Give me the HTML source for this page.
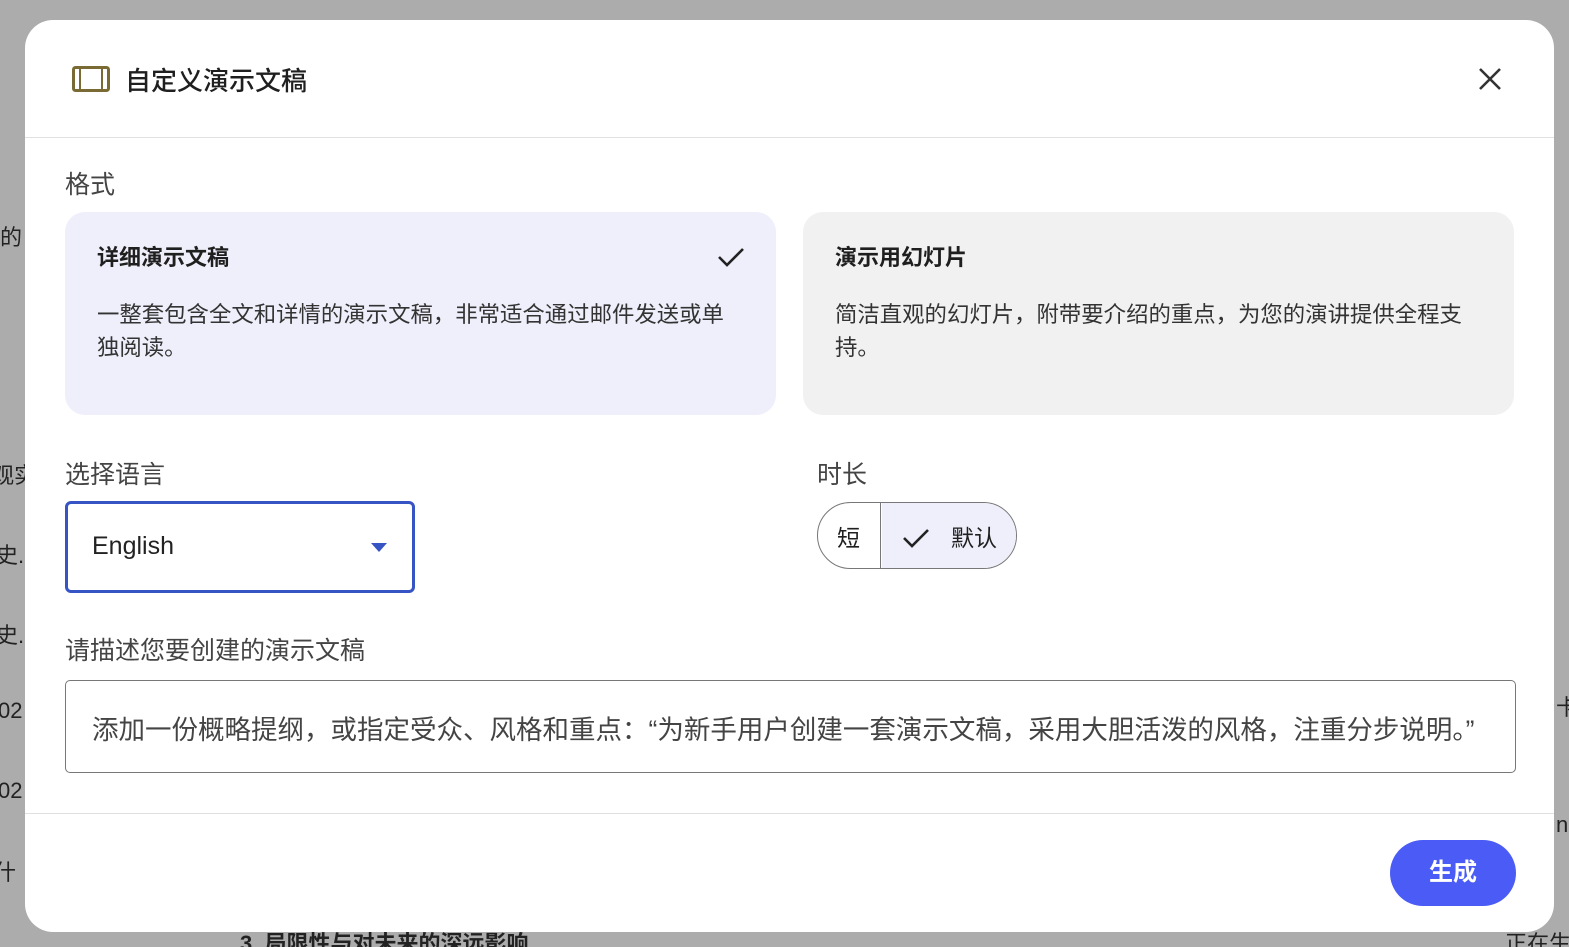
<!DOCTYPE html>
<html><head><meta charset="utf-8"><style>
*{box-sizing:border-box;margin:0;padding:0}
html,body{width:1569px;height:947px;overflow:hidden}
body{background:#acacac;font-family:"Liberation Sans","Noto Sans CJK SC",sans-serif;color:#1f1f1f;position:relative}
.bg{position:absolute;color:#222;font-size:22px;white-space:nowrap}
.modal{position:absolute;left:25px;top:20px;width:1529px;height:912px;background:#fff;border-radius:28px;overflow:hidden}
.hdr{height:118px;border-bottom:1px solid #e0e0e0;position:relative}
.title{position:absolute;left:100px;top:41px;font-size:26px;color:#1f1f1f;font-weight:500}
.lbl{position:absolute;font-size:25px;color:#444;white-space:nowrap}
.card{position:absolute;top:192px;width:711px;height:203px;border-radius:20px;padding:28px 32px}
.card h3{font-size:22px;font-weight:700;margin-bottom:26px;color:#1f1f1f}
.card p{font-size:22.4px;line-height:33px;color:#333;width:642px}
</style></head><body>
<div class="bg" style="left:0;top:220px">的</div>
<div class="bg" style="left:-8px;top:458px">观实</div>
<div class="bg" style="left:-4px;top:538px">史.</div>
<div class="bg" style="left:-4px;top:618px">史.</div>
<div class="bg" style="left:-2px;top:698px">02</div>
<div class="bg" style="left:-2px;top:778px">02</div>
<div class="bg" style="left:-6px;top:855px">什</div>
<div class="bg" style="left:240px;top:926px;font-weight:700">3. 局限性与对未来的深远影响</div>
<div class="bg" style="left:1505px;top:926px">正在生</div>
<div class="bg" style="left:1556px;top:690px">卡</div>
<div class="bg" style="left:1556px;top:812px">n</div>
<div class="modal">
 <div class="hdr">
  <svg style="position:absolute;left:47px;top:46px" width="38" height="26" viewBox="0 0 38 26"><rect x="1.5" y="1.5" width="35" height="23" rx="2" fill="none" stroke="#7a6a33" stroke-width="3"/><line x1="8" y1="2" x2="8" y2="24" stroke="#7a6a33" stroke-width="2"/><line x1="30" y1="2" x2="30" y2="24" stroke="#7a6a33" stroke-width="2"/></svg>
  <div class="title">自定义演示文稿</div>
  <svg style="position:absolute;left:1453px;top:47px" width="24" height="24" viewBox="0 0 24 24"><path d="M2 2L22 22M22 2L2 22" stroke="#333" stroke-width="2.6"/></svg>
 </div>
 <div class="lbl" style="left:40px;top:145px">格式</div>
 <div class="card" style="left:40px;background:#eeeffa">
  <h3>详细演示文稿</h3>
  <p>一整套包含全文和详情的演示文稿，非常适合通过邮件发送或单独阅读。</p>
  <svg style="position:absolute;left:652px;top:34px" width="28" height="22" viewBox="0 0 28 22"><path d="M2 11L10 19L26 3" fill="none" stroke="#222" stroke-width="2.6"/></svg>
 </div>
 <div class="card" style="left:778px;background:#f1f1f1">
  <h3>演示用幻灯片</h3>
  <p style="width:660px">简洁直观的幻灯片，附带要介绍的重点，为您的演讲提供全程支持。</p>
 </div>
 <div class="lbl" style="left:40px;top:435px">选择语言</div>
 <div style="position:absolute;left:40px;top:481px;width:350px;height:92px;border:3px solid #3654c4;border-radius:6px">
  <div style="position:absolute;left:24px;top:28px;font-size:25px;color:#222">English</div>
  <svg style="position:absolute;left:303px;top:39px" width="16" height="10" viewBox="0 0 16 10"><path d="M0 0H16L8 9Z" fill="#3654c4"/></svg>
 </div>
 <div class="lbl" style="left:792px;top:435px">时长</div>
 <div style="position:absolute;left:792px;top:482px;width:200px;height:67px;border:1px solid #777;border-radius:34px;overflow:hidden">
  <div style="position:absolute;left:0;top:0;width:63px;height:67px;border-right:1px solid #777"></div>
  <div style="position:absolute;left:64px;top:0;width:136px;height:67px;background:#eeeffa"></div>
  <div style="position:absolute;left:19px;top:16px;font-size:23px">短</div>
  <svg style="position:absolute;left:84px;top:24px" width="28" height="22" viewBox="0 0 28 22"><path d="M2 11L10 19L26 3" fill="none" stroke="#222" stroke-width="2.6"/></svg>
  <div style="position:absolute;left:133px;top:16px;font-size:23px">默认</div>
 </div>
 <div class="lbl" style="left:40px;top:611px">请描述您要创建的演示文稿</div>
 <div style="position:absolute;left:40px;top:660px;width:1451px;height:93px;border:1px solid #777;border-radius:5px">
  <div style="position:absolute;left:26px;top:27px;font-size:26.5px;color:#444;white-space:nowrap">添加一份概略提纲，或指定受众、风格和重点：“为新手用户创建一套演示文稿，采用大胆活泼的风格，注重分步说明。”</div>
 </div>
 <div style="position:absolute;left:0;top:793px;width:100%;border-top:1px solid #e0e0e0"></div>
 <div style="position:absolute;left:1365px;top:820px;width:126px;height:66px;border-radius:33px;background:#4a5cf5;color:#fff;font-size:24px;font-weight:700;text-align:center;line-height:66px">生成</div>
</div>
</body></html>
